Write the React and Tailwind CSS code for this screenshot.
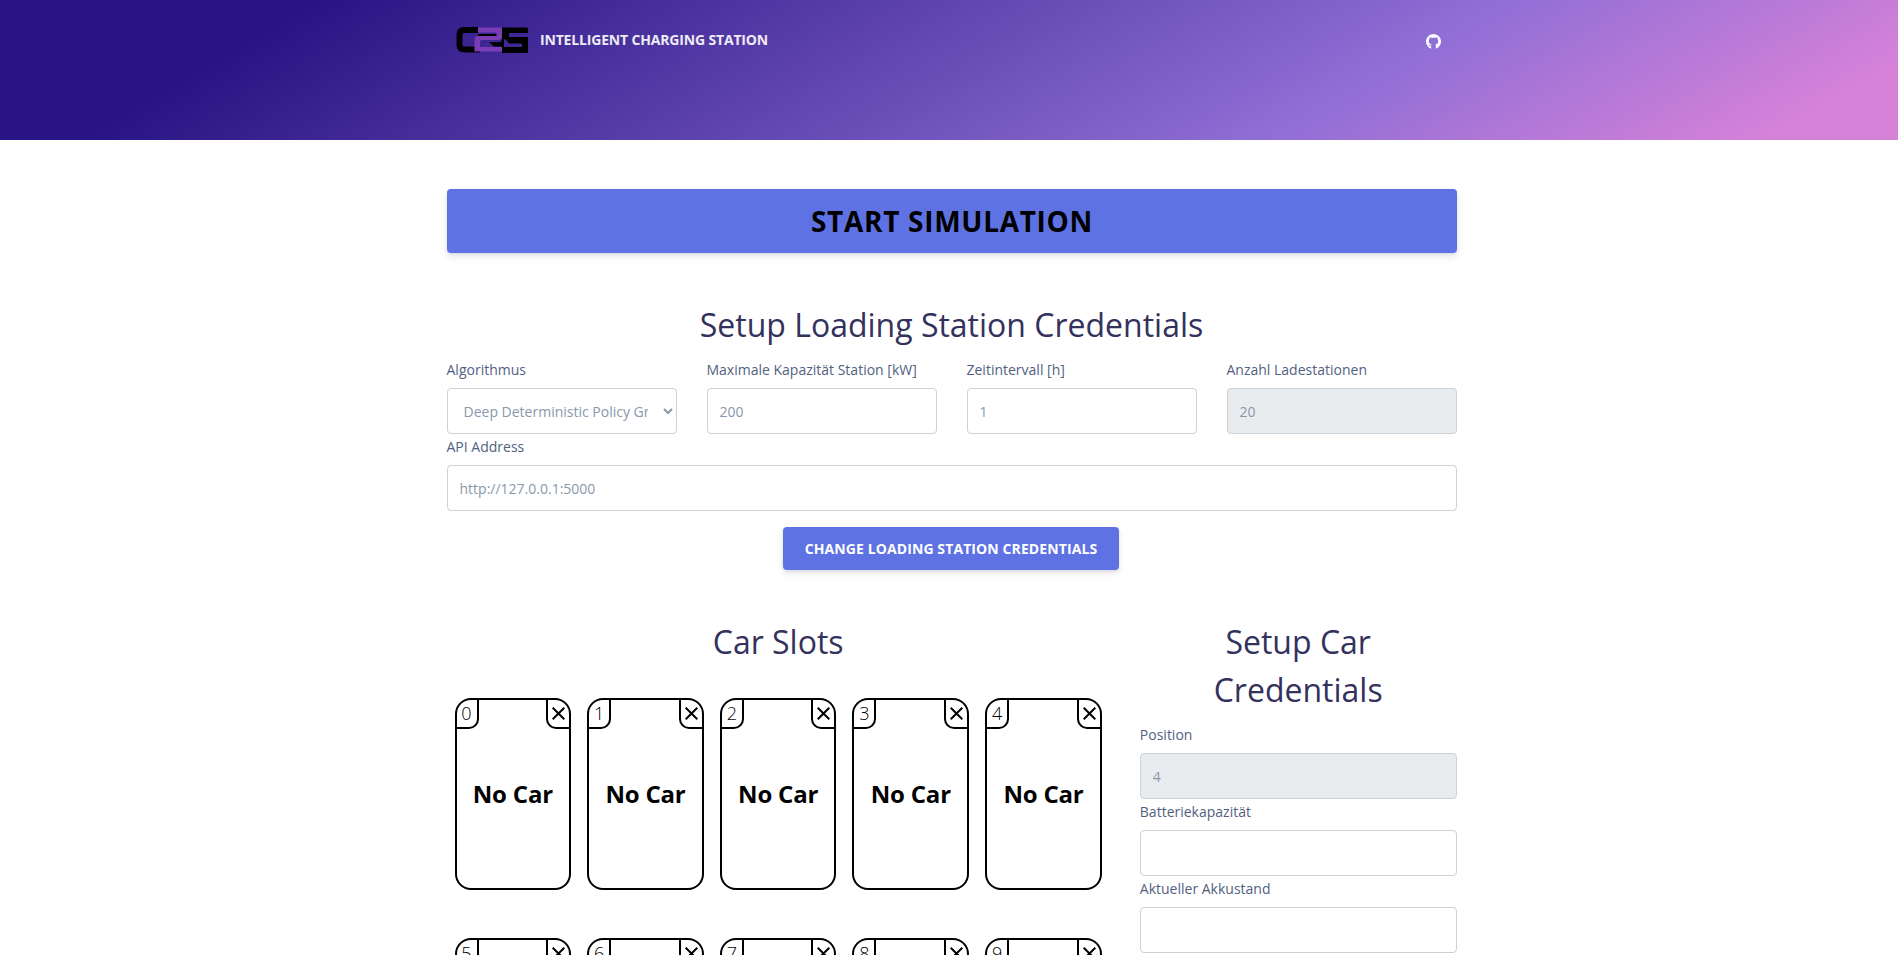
import React from "react";

const slots = [0, 1, 2, 3, 4, 5, 6, 7, 8, 9];

function Logo() {
  return (
    <svg width="72" height="26" viewBox="0 0 72 26" className="block shrink-0">
      <path d="M22 3H8Q3.500 3 3.500 7.500V18Q3.500 22.500 9 22.500H24" fill="none" stroke="#000" strokeWidth="6" />
      <path d="M46 0.500H71L72 1.500V6H53V10H72V26H46V20H66V16.500H53L50 12.500H48V20H45Z" fill="#000" />
      <path d="M22 8H41" fill="none" stroke="#000" strokeWidth="2" />
      <path d="M33 15H46V19.500H38Z" fill="#000" />
      <path d="M22 0.500H46V10Q46 13 43 13H26Q24 13 24 15V20H46V24.500H18.500V13Q18.500 9 22 9H40.500V5.500H22Z" fill="#7b3db4" />
    </svg>
  );
}

function Field({ label, value, disabled }) {
  return (
    <div className="flex flex-col">
      <label className="mb-[6px] block h-[25px] pt-px text-[14px] font-normal leading-6 text-[#525f7f]">{label}</label>
      <input
        defaultValue={value}
        disabled={disabled}
        className="block h-[46px] w-full rounded-[4px] border border-[#cad1d7] bg-white px-3 text-[14px] font-normal text-[#8898aa] disabled:bg-[#e9ecef]"
      />
    </div>
  );
}

function Slot({ index }) {
  return (
    <div className="relative flex h-48 items-center justify-center overflow-hidden rounded-2xl border-2 border-black text-black">
      <span className="absolute left-0 top-0 flex h-[29px] w-[22px] items-center justify-center rounded-br-[10px] border-b-2 border-r-2 border-black text-[18px]">
        {index}
      </span>
      <button className="absolute right-0 top-0 flex h-[29px] w-[23px] items-center justify-center rounded-bl-[10px] border-b-2 border-l-2 border-black">
        <svg width="13" height="13" viewBox="0 0 13 13" className="block">
          <path d="M0.700 0.700L12.300 12.300M12.300 0.700L0.700 12.300" stroke="#000" strokeWidth="2" />
        </svg>
      </button>
      <span className="text-[24px] font-bold tracking-[-0.2px]">No Car</span>
    </div>
  );
}

export default function App() {
  return (
    <div className="h-[955px] overflow-hidden bg-white font-['Open_Sans',sans-serif] font-light">
      <header className="h-[140px] bg-[linear-gradient(150deg,#281483_15%,#8f6ed5_70%,#d782d9_94%)]">
        <div className="flex h-[80px] items-center pl-[456px] pr-[457px]">
          <Logo />
          <span className="-mt-[2px] ml-3 text-[14px] font-bold uppercase tracking-[-0.17px] text-white/90">Intelligent Charging Station</span>
          <a className="ml-auto mt-[2px]" href="#github" aria-label="GitHub">
            <svg width="15" height="15" viewBox="0 0 16 16" className="block" fill="#fff" fillOpacity="0.95">
              <path d="M8 0a8 8 0 0 0-2.500 15.600V13C3.500 13.300 3.200 12 2.600 11.500c1.100-.2 1.400 1.200 2.900.7.100-.6.300-.9.600-1.100C4.200 10.900 3 9.800 3 7.500c0-.9.300-1.600.8-2.200-.1-.5-.1-1.300.2-1.900.8 0 1.500.4 2 .8a7.500 7.500 0 0 1 4 0c.5-.4 1.200-.8 2-.8.3.6.3 1.400.2 1.900.5.600.8 1.300.8 2.200 0 2.300-1.200 3.400-3.100 3.600.4.400.6.900.6 1.600v2.900A8 8 0 0 0 8 0Z" />
            </svg>
          </a>
        </div>
      </header>
      <main className="ml-[446.5px] w-[1010px] pt-[49px]">
        <button className="flex h-16 w-full items-center justify-center rounded-[4px] bg-[#5e72e4] pl-px text-[28px] font-bold uppercase tracking-[0.025em] text-black shadow-[0_4px_6px_rgba(50,50,93,0.11),0_1px_3px_rgba(0,0,0,0.08)]">
          Start Simulation
        </button>
        <h1 className="mt-12 text-center text-[32px] font-normal leading-[48px] text-[#32325d]">Setup Loading Station Credentials</h1>
        <div className="mt-2 grid grid-cols-4 gap-x-[30px]">
          <div className="flex flex-col">
            <label className="mb-[6px] block h-[25px] pt-px text-[14px] font-normal leading-6 text-[#525f7f]">Algorithmus</label>
            <select className="block h-[46px] w-full rounded-[4px] border border-[#cad1d7] bg-white px-3 text-[14px] font-normal text-[#8898aa]">
              <option>Deep Deterministic Policy Gradient</option>
            </select>
          </div>
          <Field label="Maximale Kapazität Station [kW]" value="200" />
          <Field label="Zeitintervall [h]" value="1" />
          <Field label="Anzahl Ladestationen" value="20" disabled />
        </div>
        <Field label="API Address" value="http://127.0.0.1:5000" />
        <div className="mt-4 flex justify-center pr-px">
          <button className="h-[43px] w-[336px] rounded-[4px] bg-[#5e72e4] text-[14px] font-bold uppercase tracking-[0.1px] text-white shadow-[0_4px_6px_rgba(50,50,93,0.11),0_1px_3px_rgba(0,0,0,0.08)]">
            Change Loading Station Credentials
          </button>
        </div>
        <div className="mt-12 flex gap-[30px]">
          <section className="w-[663.33px] shrink-0">
            <h1 className="text-center text-[32px] font-normal leading-[48px] text-[#32325d]">Car Slots</h1>
            <div className="grid grid-cols-5 gap-x-4 gap-y-12 px-2 pt-8">
              {slots.map((i) => (
                <Slot key={i} index={i} />
              ))}
            </div>
          </section>
          <section className="min-w-0 flex-1">
            <h1 className="mb-2 text-center text-[32px] font-normal leading-[48px] text-[#32325d]">
              Setup Car
              <br />
              Credentials
            </h1>
            <Field label="Position" value="4" disabled />
            <Field label="Batteriekapazität" value="" />
            <Field label="Aktueller Akkustand" value="" />
          </section>
        </div>
      </main>
    </div>
  );
}
